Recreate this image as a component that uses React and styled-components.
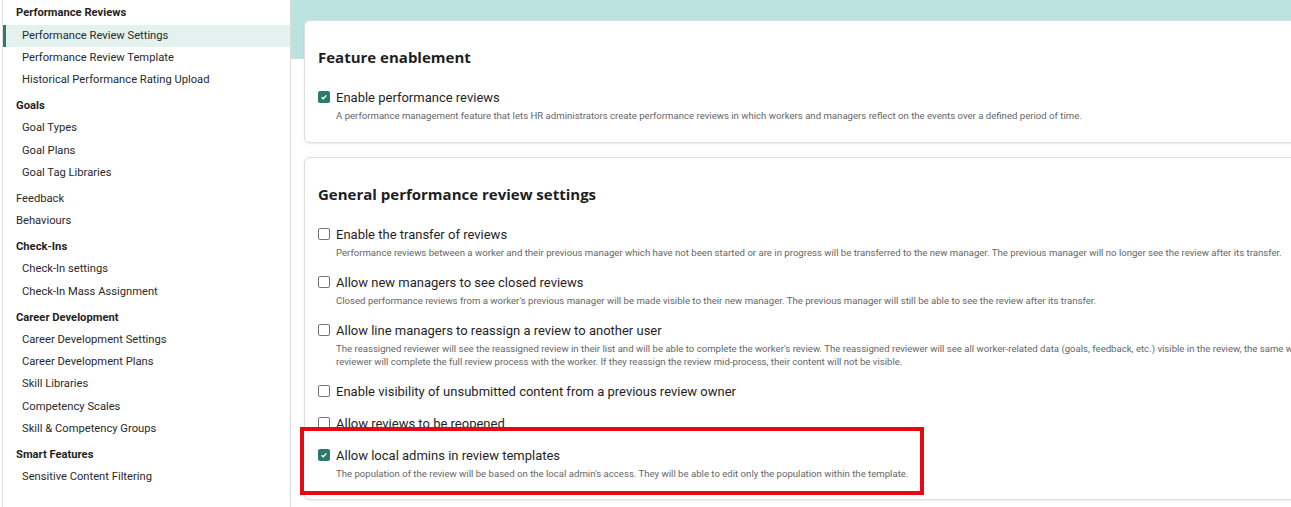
import React from "react";
import styled, { createGlobalStyle } from "styled-components";

const GlobalStyle = createGlobalStyle`
  html, body {
    margin: 0;
    padding: 0;
    overflow: hidden;
    background: #fff;
    font-family: Roboto, "Liberation Sans", sans-serif;
  }
`;

const nav = [
  {
    title: "Performance Reviews",
    items: [
      "Performance Review Settings",
      "Performance Review Template",
      "Historical Performance Rating Upload",
    ],
  },
  { title: "Goals", items: ["Goal Types", "Goal Plans", "Goal Tag Libraries"] },
  { links: ["Feedback", "Behaviours"] },
  { title: "Check-Ins", items: ["Check-In settings", "Check-In Mass Assignment"] },
  {
    title: "Career Development",
    items: [
      "Career Development Settings",
      "Career Development Plans",
      "Skill Libraries",
      "Competency Scales",
      "Skill & Competency Groups",
    ],
  },
  { title: "Smart Features", items: ["Sensitive Content Filtering"] },
];

const generalSettings = [
  {
    label: "Enable the transfer of reviews",
    desc: [
      "Performance reviews between a worker and their previous manager which have not been started or are in progress will be transferred to the new manager. The previous manager will no longer see the review after its transfer.",
    ],
  },
  {
    label: "Allow new managers to see closed reviews",
    desc: [
      "Closed performance reviews from a worker's previous manager will be made visible to their new manager. The previous manager will still be able to see the review after its transfer.",
    ],
  },
  {
    label: "Allow line managers to reassign a review to another user",
    desc: [
      "The reassigned reviewer will see the reassigned review in their list and will be able to complete the worker's review. The reassigned reviewer will see all worker-related data (goals, feedback, etc.) visible in the review, the same way as the original reviewer. The reassigned",
      "reviewer will complete the full review process with the worker. If they reassign the review mid-process, their content will not be visible.",
    ],
  },
  { label: "Enable visibility of unsubmitted content from a previous review owner" },
  { label: "Allow reviews to be reopened" },
];

const Check = ({ checked }) => (
  <Box $checked={checked}>
    {checked && (
      <svg width="8" height="8" viewBox="0 0 8 8">
        <path d="M1.6 4.2 L3.3 5.8 L6.4 2.4" fill="none" stroke="#fff" strokeWidth="1.4" />
      </svg>
    )}
  </Box>
);

const Setting = ({ checked, label, desc }) => (
  <Row>
    <Check checked={checked} />
    <RowText>
      <Label>{label}</Label>
      {desc && (
        <Desc>
          {desc.map((line) => (
            <span key={line}>{line}</span>
          ))}
        </Desc>
      )}
    </RowText>
  </Row>
);

const App = () => {
  return (
    <Main>
      <GlobalStyle />
      <Sidebar>
        {nav.map((group, i) => (
          <Group key={i}>
            {group.title && <GroupTitle>{group.title}</GroupTitle>}
            {group.items &&
              group.items.map((item) => (
                <NavItem key={item} $active={item === "Performance Review Settings"}>
                  {item}
                </NavItem>
              ))}
            {group.links &&
              group.links.map((link) => <NavLink key={link}>{link}</NavLink>)}
          </Group>
        ))}
      </Sidebar>
      <Content>
        <Card>
          <CardTitle>Feature enablement</CardTitle>
          <Setting
            checked
            label="Enable performance reviews"
            desc={[
              "A performance management feature that lets HR administrators create performance reviews in which workers and managers reflect on the events over a defined period of time.",
            ]}
          />
        </Card>
        <Card>
          <CardTitle>General performance review settings</CardTitle>
          {generalSettings.map((s) => (
            <Setting key={s.label} {...s} />
          ))}
          <Highlight>
            <Setting
              checked
              label="Allow local admins in review templates"
              desc={[
                "The population of the review will be based on the local admin's access. They will be able to edit only the population within the template.",
              ]}
            />
          </Highlight>
        </Card>
      </Content>
    </Main>
  );
};

export default App;

const Main = styled.div`
  display: flex;
  height: 100vh;
  width: 100vw;
  overflow: hidden;
`;

const Sidebar = styled.nav`
  flex: 0 0 289px;
  box-sizing: border-box;
  margin-left: 2px;
  padding-top: 2.3px;
  border-left: 1px solid #e2e2e2;
  border-right: 1px solid #dcdcdc;
  background: #fff;
`;

const Group = styled.div`
  & + & {
    margin-top: 3.6px;
  }
`;

const GroupTitle = styled.div`
  height: 22.3px;
  line-height: 22.3px;
  padding-left: 13px;
  font-size: 11.2px;
  font-weight: 700;
  color: #1f1f1f;
`;

const NavLink = styled.div`
  height: 22.3px;
  line-height: 22.3px;
  padding-left: 13px;
  font-size: 11.2px;
  color: #2a2a2a;
`;

const NavItem = styled.div`
  height: 22.3px;
  line-height: 22.3px;
  padding-left: ${(p) => (p.$active ? "16px" : "19px")};
  font-size: 11.2px;
  color: #2a2a2a;
  white-space: nowrap;
  background: ${(p) => (p.$active ? "#e3f1ef" : "transparent")};
  border-left: ${(p) => (p.$active ? "3px solid #2e7b6d" : "none")};
`;

const Content = styled.main`
  flex: 1;
  min-width: 0;
  padding: 20px 0 0 13px;
  display: flex;
  flex-direction: column;
  gap: 14px;
  background: linear-gradient(#bce3df 0, #bce3df 59px, #fff 59px);
`;

const Card = styled.section`
  width: 1200px;
  box-sizing: border-box;
  padding: 26px 13px 4px;
  background: #fff;
  border: 1px solid #dedede;
  border-radius: 6px;
  box-shadow: 0 1px 2px rgba(0, 0, 0, 0.08);
`;

const CardTitle = styled.h2`
  margin: 0 0 23px;
  line-height: 20px;
  font-family: "Open Sans", sans-serif;
  font-size: 15px;
  font-weight: 700;
  color: #1e1e1e;
`;

const Row = styled.div`
  display: flex;
  align-items: flex-start;
  gap: 6px;
  margin-bottom: 16px;
`;

const Box = styled.span`
  flex: 0 0 auto;
  box-sizing: border-box;
  width: 12px;
  height: 12px;
  margin-top: 1px;
  border-radius: 2px;
  border: 1px solid ${(p) => (p.$checked ? "#2b7a6b" : "#757575")};
  background: ${(p) => (p.$checked ? "#2b7a6b" : "#fff")};
  display: flex;
  align-items: center;
  justify-content: center;
`;

const RowText = styled.div`
  display: flex;
  flex-direction: column;
  gap: 3px;
`;

const Label = styled.div`
  line-height: 16px;
  font-size: 13px;
  color: #1f1f1f;
  white-space: nowrap;
`;

const Desc = styled.div`
  display: flex;
  flex-direction: column;
  line-height: 13px;
  font-size: 9.6px;
  color: #666;
  white-space: nowrap;
`;

const Highlight = styled.div`
  position: relative;
  box-sizing: border-box;
  width: 624px;
  margin: -21px 0 0 -18px;
  padding: 17px 0 11px 14px;
  background: #fff;
  border: 4px solid #e50914;

  ${Row} {
    margin-bottom: 0;
  }
`;
